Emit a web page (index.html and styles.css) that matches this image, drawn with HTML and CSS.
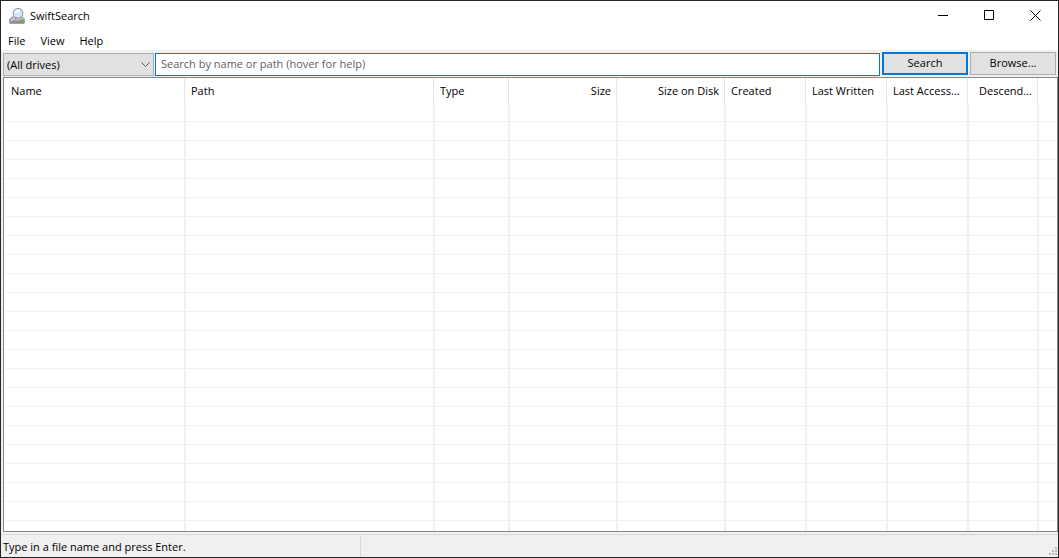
FILE: index.html
```html
<!DOCTYPE html>
<html lang="en">
<head>
<meta charset="utf-8">
<title>SwiftSearch</title>
<link rel="stylesheet" href="styles.css">
</head>
<body>
<div class="window">
  <header class="titlebar">
    <svg class="app-icon" viewBox="0 0 16 16" aria-hidden="true">
      <path d="M2.500 9h11.500l1.700 2.200v3.300l-.7 1H1l-.7-1v-3.300z" fill="#c4c6ca" stroke="#85878c" stroke-width=".6"/>
      <path d="M.5 11.500h15v3.200l-.5.600H1l-.5-.6z" fill="#8d9096"/>
      <path d="M1 12h10" stroke="#d9dbde" stroke-width=".8"/>
      <path d="M11.500 11.500h2v3h-2z" fill="#4fc02c"/>
      <path d="M6.300 9l-4.300 4" stroke="#7d8087" stroke-width="3"/>
      <path d="M6.300 9l-4.300 4" stroke="#e3e4e7" stroke-width="1.600"/>
      <circle cx="9" cy="5.300" r="4.800" fill="#cfe5f8" stroke="#8b93a0" stroke-width="1.100"/>
      <circle cx="9" cy="5.300" r="3.900" fill="none" stroke="#e9f3fc" stroke-width=".6"/>
      <path d="M5.600 5a3.500 3.500 0 0 1 6-2.500c-1 2-3 2.500-6 2.500z" fill="#f4faff"/>
    </svg>
    <span class="title">SwiftSearch</span>
    <div class="controls">
      <button class="control" aria-label="Minimize"><svg viewBox="0 0 11 11"><path d="M0 5.500h10"/></svg></button>
      <button class="control" aria-label="Maximize"><svg viewBox="0 0 11 11"><path d="M.5.5h9v9h-9z"/></svg></button>
      <button class="control" aria-label="Close"><svg viewBox="0 0 11 11"><path d="M.5.5l10 10M10.500.5l-10 10"/></svg></button>
    </div>
  </header>
  <nav class="menu">
    <button class="menu-item">File</button>
    <button class="menu-item">View</button>
    <button class="menu-item">Help</button>
  </nav>
  <form class="toolbar" onsubmit="return false">
    <div class="drive">
      <select class="drive-select" aria-label="Drive"><option>(All drives)</option></select>
      <svg class="chevron" viewBox="0 0 9 6" aria-hidden="true"><path d="M.5.5l4 4 4-4"/></svg>
    </div>
    <input class="query" type="text" aria-label="Search" placeholder="Search by name or path (hover for help)">
    <div class="actions">
      <button class="button primary" type="submit">Search</button>
      <button class="button" type="button">Browse...</button>
    </div>
  </form>
  <main class="list">
    <table class="files">
      <colgroup>
        <col class="w-name"><col class="w-path"><col class="w-type"><col class="w-size"><col class="w-size">
        <col class="w-date"><col class="w-date"><col class="w-date"><col class="w-count"><col>
      </colgroup>
      <thead>
        <tr>
          <th>Name</th><th>Path</th><th>Type</th><th class="num">Size</th><th class="num">Size on Disk</th>
          <th>Created</th><th>Last Written</th><th>Last Access...</th><th class="num">Descend...</th><th></th>
        </tr>
      </thead>
      <tbody id="rows"></tbody>
    </table>
  </main>
  <footer class="status">
    <span class="message">Type in a file name and press Enter.</span>
    <svg class="grip" viewBox="0 0 8 8" aria-hidden="true"><path d="M6 0h2v2H6zM3 3h2v2H3zM6 3h2v2H6zM0 6h2v2H0zM3 6h2v2H3zM6 6h2v2H6z"/></svg>
  </footer>
</div>
<script src="rows.js"></script>
</body>
</html>
```

FILE: styles.css
```css
* { box-sizing: border-box; }

body {
  margin: 0;
  font: 11px/16px "Open Sans", "Noto Sans", sans-serif;
  color: #000;
}

button, input, select { font: inherit; color: inherit; margin: 0; }

.window {
  display: flex;
  flex-direction: column;
  height: 100vh;
  border: 1px solid #252525;
  background: #f0f0f0;
}

.titlebar {
  display: flex;
  align-items: center;
  height: 29px;
  padding-left: 8px;
  background: #fff;
}

.app-icon { width: 16px; height: 16px; }
.title { margin-left: 5px; }
.controls { display: flex; margin-left: auto; }

.control {
  display: flex;
  align-items: center;
  justify-content: center;
  width: 46px;
  height: 29px;
  padding: 0;
  border: 0;
  background: none;
}

.control svg {
  width: 11px;
  height: 11px;
  fill: none;
  stroke: #000;
}

.menu {
  display: flex;
  gap: 1px;
  height: 20px;
  background: #fff;
}

.menu-item {
  padding: 1px 7px 0;
  border: 0;
  background: none;
}

.toolbar {
  display: flex;
  gap: 1px;
  padding: 2px 2px 1px;
}

.drive { position: relative; width: 151px; margin-top: 1px; }

.drive-select {
  width: 100%;
  height: 23px;
  padding: 0 3px;
  border: 1px solid #adadad;
  border-radius: 0;
  background: #e1e1e1;
  appearance: none;
}

.chevron {
  position: absolute;
  top: 9px;
  right: 4px;
  width: 9px;
  height: 6px;
  fill: none;
  stroke: #555;
  pointer-events: none;
}

.query {
  flex: 1;
  min-width: 0;
  height: 23px;
  margin-top: 1px;
  padding: 0 5px 2px;
  border: 1px solid #0078d7;
  background: #fff;
}

.query::placeholder { color: #606060; opacity: 1; }

.actions { display: flex; gap: 2px; margin-left: 1px; }

.button {
  width: 86px;
  height: 23px;
  padding: 0 0 1px;
  border: 1px solid #adadad;
  background: #e1e1e1;
}

.primary { border: 2px solid #0078d7; }

.list {
  flex: 1;
  min-height: 0;
  margin-left: 2px;
  overflow: hidden;
  border: 1px solid #828790;
  background: #fff;
}

.files {
  width: 100%;
  table-layout: fixed;
  border-spacing: 0;
}

.w-name { width: 180px; }
.w-path { width: 249px; }
.w-type { width: 75px; }
.w-size { width: 108px; }
.w-date { width: 81px; }
.w-count { width: 70px; }

.files th {
  height: 25px;
  padding: 0 5px 0 6px;
  border-left: 1px solid #e5e5e5;
  font-weight: 400;
  text-align: left;
  white-space: nowrap;
}

.files .num { text-align: right; }

.files td {
  height: 19px;
  padding: 0;
  border-left: 2px solid #edf1f8;
  border-bottom: 1px solid #f0f0f0;
}

.files th:first-child, .files td:first-child { border-left-color: #fff; }

.status {
  display: flex;
  align-items: center;
  justify-content: space-between;
  height: 23px;
  margin-top: 2px;
  padding: 1px 1px 0 2px;
  border-top: 1px solid #d7d7d7;
}

.message {
  width: 358px;
  height: 21px;
  line-height: 21px;
  border-right: 1px solid #d7d7d7;
}

.grip {
  align-self: flex-end;
  width: 8px;
  height: 8px;
  margin-bottom: 2px;
  fill: #b8b8b8;
}
```

FILE: rows.js
```js
const body = document.getElementById("rows");
for (let r = 0; r < 23; r++) {
  const row = body.insertRow();
  for (let c = 0; c < 10; c++) row.insertCell();
}
```
